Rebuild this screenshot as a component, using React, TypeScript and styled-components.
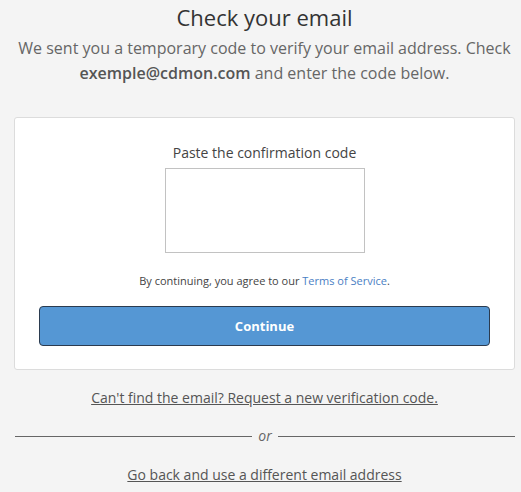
import React from 'react';
import styled, {createGlobalStyle} from 'styled-components';

const GlobalStyle = createGlobalStyle`
    html, body {
        margin: 0;
        padding: 0;
        background: #f4f4f4;
    }
    body {
        font-family: 'Open Sans', 'Noto Sans', sans-serif;
        color: #555;
    }
`;

export default function App() {
    return (
        <>
            <GlobalStyle/>
            <Page>
                <Title>{'Check your email'}</Title>
                <Intro>
                    {'We sent you a temporary code to verify your email address. Check '}
                    <strong>{'exemple@cdmon.com'}</strong>
                    {' and enter the code below.'}
                </Intro>
                <Card>
                    <FieldLabel htmlFor='code'>{'Paste the confirmation code'}</FieldLabel>
                    <CodeInput id='code'/>
                    <Terms>
                        {'By continuing, you agree to our '}
                        <TermsLink href='#'>{'Terms of Service'}</TermsLink>
                        {'.'}
                    </Terms>
                    <ContinueButton type='button'>{'Continue'}</ContinueButton>
                </Card>
                <FooterLink href='#'>{"Can't find the email? Request a new verification code."}</FooterLink>
                <Divider>
                    <DividerText>{'or'}</DividerText>
                </Divider>
                <FooterLink
                    href='#'
                    $flush={true}
                >
                    {'Go back and use a different email address'}
                </FooterLink>
            </Page>
        </>
    );
}

const Page = styled.div`
    width: 501px;
    margin-left: 14px;
    display: flex;
    flex-direction: column;
    align-items: stretch;
    text-align: center;
`;

const Title = styled.h1`
    margin: 3px 0 0;
    font-size: 22px;
    line-height: 28px;
    font-weight: 400;
    color: #333;
`;

const Intro = styled.p`
    margin: 5px -10px 0;
    font-size: 16px;
    line-height: 25px;
    color: #666;

    strong {
        font-weight: 600;
        color: #555;
    }
`;

const Card = styled.div`
    margin-top: 31px;
    background: #fff;
    border: 1px solid #dcdcdc;
    border-radius: 3px;
    padding: 25px 24px 23px;
    display: flex;
    flex-direction: column;
    align-items: center;
`;

const FieldLabel = styled.label`
    font-size: 14px;
    line-height: 20px;
    color: #444;
`;

const CodeInput = styled.textarea`
    margin-top: 5px;
    box-sizing: border-box;
    width: 200px;
    height: 85px;
    border: 1px solid #c2c2c2;
    border-radius: 0;
    resize: none;
    outline: none;
    background: #fff;
`;

const Terms = styled.div`
    margin-top: 20px;
    font-size: 11px;
    line-height: 16px;
    color: #444;
`;

const TermsLink = styled.a`
    color: #4a80c4;
    text-decoration: none;
`;

const ContinueButton = styled.button`
    margin-top: 17px;
    align-self: stretch;
    height: 40px;
    box-sizing: border-box;
    background: #5597d4;
    border: 1px solid #2b3b4f;
    border-radius: 4px;
    color: #fff;
    font-family: 'Open Sans', 'Noto Sans', sans-serif;
    font-size: 13px;
    font-weight: 700;
    cursor: pointer;
`;

const FooterLink = styled.a<{$flush?: boolean}>`
    margin-top: ${({$flush}) => ($flush ? '0' : '18px')};
    align-self: center;
    font-size: 14px;
    line-height: 20px;
    color: #555;
    text-decoration: underline;
`;

const Divider = styled.div`
    margin: 18px 0 19px 1px;
    display: flex;
    align-items: center;
    gap: 6px;

    &::before,
    &::after {
        content: '';
        flex: 1;
        height: 1px;
        background: #666;
    }
`;

const DividerText = styled.span`
    font-size: 14px;
    line-height: 20px;
    font-style: italic;
    color: #666;
`;
